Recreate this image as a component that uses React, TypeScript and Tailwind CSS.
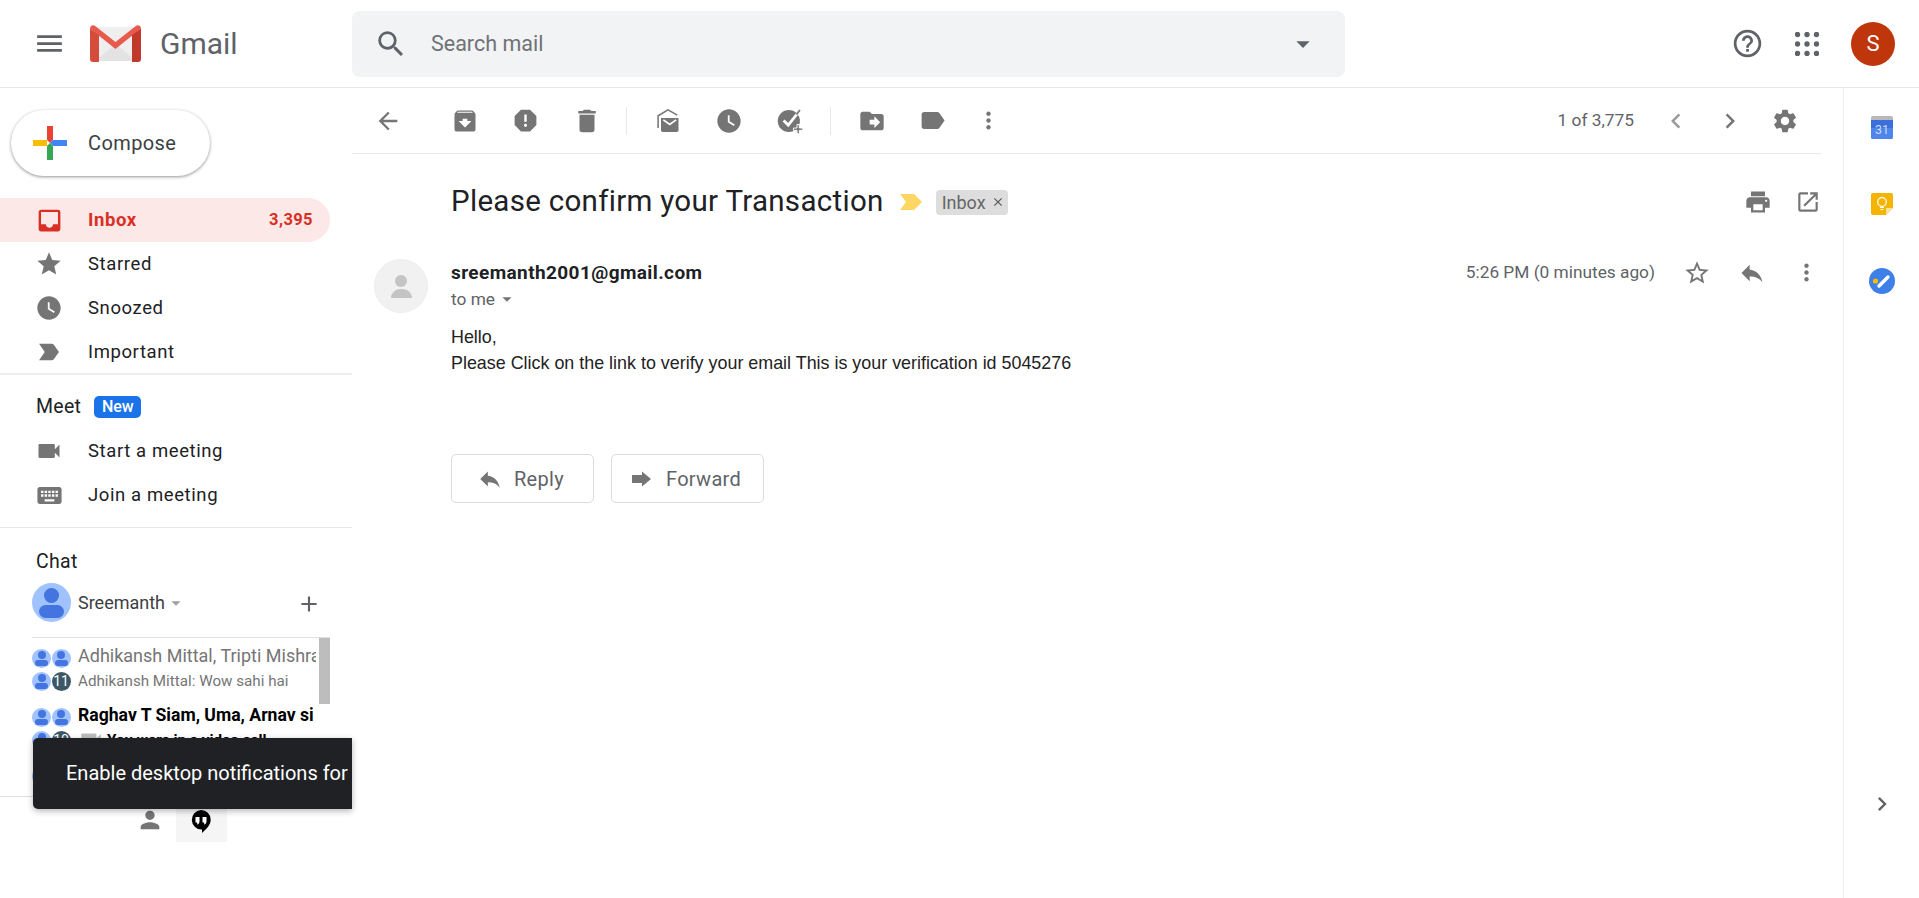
import React from 'react';
import {
  MdAdd,
  MdArchive,
  MdArrowBack,
  MdArrowDropDown,
  MdChevronLeft,
  MdChevronRight,
  MdClose,
  MdDelete,
  MdDriveFileMove,
  MdHelpOutline,
  MdInbox,
  MdKeyboard,
  MdLabel,
  MdLabelImportant,
  MdMenu,
  MdMoreVert,
  MdOpenInNew,
  MdPerson,
  MdPrint,
  MdReply,
  MdReport,
  MdSearch,
  MdSettings,
  MdStar,
  MdStarBorder,
  MdVideocam,
  MdWatchLater,
} from 'react-icons/md';

const GmailLogo = () => (
  <svg width="51" height="37" viewBox="0 0 51 37">
    <path d="M4 2h43v33H4z" fill="#efefef" />
    <path d="M5 36 25.500 19 46 36z" fill="#e3e3e3" />
    <path d="M0 3.500C0 .5 3-.8 5.500 1.200L25.500 17 45.500 1.200C48-.8 51 .5 51 3.500L25.500 24z" fill="#e75a4d" />
    <path d="M0 3.500 9 10v27H3a3 3 0 0 1-3-3z" fill="#d54c3f" />
    <path d="M51 3.500 42 10v27h6a3 3 0 0 0 3-3z" fill="#c0392b" />
  </svg>
);

const ComposePlus = () => (
  <svg width="34" height="34" viewBox="0 0 34 34">
    <path d="M14 0h6v14h-6z" fill="#ea4335" />
    <path d="M20 14h14v6H20z" fill="#4285f4" />
    <path d="M14 20h6v14h-6z" fill="#34a853" />
    <path d="M0 14h14v6H0z" fill="#fbbc04" />
    <path d="M14 14h6l-3 3z" fill="#ea4335" />
    <path d="M20 14v6l-3-3z" fill="#4285f4" />
    <path d="M14 20h6l-3-3z" fill="#34a853" />
  </svg>
);

const AppsDots = () => (
  <svg width="24" height="24" viewBox="0 0 24 24" fill="#5f6368">
    {[2.5, 12, 21.5].map((cy) =>
      [2.5, 12, 21.5].map((cx) => <circle key={`${cx}-${cy}`} cx={cx} cy={cy} r="2.7" />)
    )}
  </svg>
);

const MarkUnread = () => (
  <svg width="28" height="28" viewBox="0 0 24 24" fill="#757575">
    <path d="M3.500 18V7.500L12 2.500l8 4.500" fill="none" stroke="#757575" strokeWidth="1.300" />
    <path d="M6 9.500h15V20a1.500 1.500 0 0 1-1.500 1.500h-12A1.500 1.500 0 0 1 6 20z" />
    <path d="m8 11 5.500 4 5.500-4" fill="none" stroke="#fff" strokeWidth="1.500" />
  </svg>
);

const AddTask = () => (
  <svg width="28" height="28" viewBox="0 0 24 24" fill="#757575">
    <circle cx="11" cy="12" r="9.500" />
    <path d="m6.500 11.500 4 4 7.500-9.500" fill="none" stroke="#fff" strokeWidth="2.400" />
    <path d="m17.500 6.500 3-4" fill="none" stroke="#757575" strokeWidth="1.500" />
    <path d="M18 15h2v3h3v2h-3v3h-2v-3h-3v-2h3z" stroke="#fff" strokeWidth=".8" />
  </svg>
);

const ForwardFilled = () => (
  <svg width="24" height="24" viewBox="0 0 24 24" fill="#757575">
    <path d="M13 4.500 22 12l-9 7.500V16H3V8h10z" />
  </svg>
);

const CalendarIcon = () => (
  <svg width="22" height="23" viewBox="0 0 22 23">
    <path d="M2 0h18a2 2 0 0 1 2 2v3H0V2a2 2 0 0 1 2-2z" fill="#b9b9b9" />
    <path d="M0 4h22v17a2 2 0 0 1-2 2H2a2 2 0 0 1-2-2z" fill="#3d6fdc" />
    <path d="M0 12h22v9a2 2 0 0 1-2 2H2a2 2 0 0 1-2-2z" fill="#4f86ec" />
    <text x="11" y="18" textAnchor="middle" fontSize="12.5" fill="#c9dafc" fontFamily="Roboto, sans-serif">31</text>
  </svg>
);

const KeepIcon = () => (
  <svg width="22" height="22" viewBox="0 0 22 22">
    <path d="M2 0h18a2 2 0 0 1 2 2v13l-7 7H2a2 2 0 0 1-2-2V2a2 2 0 0 1 2-2z" fill="#f4b400" />
    <path d="M22 15h-7v7z" fill="#fbe39a" />
    <circle cx="11" cy="9" r="4.3" fill="none" stroke="#fff" strokeWidth="1.2" />
    <path d="M9 14.500h4M9.500 16.500h3" stroke="#fff" strokeWidth="1.2" />
  </svg>
);

const TasksIcon = () => (
  <svg width="26" height="26" viewBox="0 0 26 26">
    <circle cx="13" cy="13" r="13" fill="#3f7fe8" />
    <circle cx="6.5" cy="13" r="2.6" fill="#fbbc04" />
    <path d="m10 18 9-9" stroke="#fff" strokeWidth="3.4" strokeLinecap="round" />
  </svg>
);

const HangoutsIcon = () => (
  <svg width="20" height="23" viewBox="0 0 20 23">
    <path d="M10 0a9.700 9.700 0 0 1 9.700 9.700c0 5.300-4.500 9.300-8.700 13.300v-3.600A9.700 9.700 0 0 1 10 0z" fill="#000" />
    <path d="M4.500 7h4v4.200c0 1.800-1 3-2.300 3.300v-2H4.500zM11.500 7h4v4.200c0 1.800-1 3-2.300 3.300v-2h-1.700z" fill="#fff" />
  </svg>
);

function ToolIcon({ children, className = 'w-[61px]' }: { children: React.ReactNode; className?: string }) {
  return <div className={`flex h-[65px] shrink-0 items-center justify-center text-[#757575] ${className}`}>{children}</div>;
}

function NavRow({ icon, label }: { icon: React.ReactNode; label: string }) {
  return (
    <div className="flex h-[44px] items-center text-[#202124]">
      <div className="flex w-[88px] shrink-0 justify-center pl-[10px] text-[#757575]">{icon}</div>
      <span className="pt-[2px] text-[18.5px] tracking-[0.6px]">{label}</span>
    </div>
  );
}

function GroupAvatar({ badge }: { badge?: string }) {
  const dot = (
    <div className="flex h-[19px] w-[19px] flex-col items-center justify-center overflow-hidden rounded-full bg-[#a0c3ff]">
      <div className="h-[8px] w-[8px] rounded-full bg-[#4374e0]" />
      <div className="mt-[1px] h-[6px] w-[13px] rounded-full bg-[#4374e0]" />
    </div>
  );
  return (
    <div className="grid w-[39px] shrink-0 grid-cols-2">
      {dot}
      {dot}
      {dot}
      {badge ? (
        <div className="flex h-[19px] w-[19px] items-center justify-center rounded-full bg-[#3c5866] text-[14px] text-white">{badge}</div>
      ) : (
        dot
      )}
    </div>
  );
}

function Sidebar() {
  return (
    <aside className="relative flex w-[352px] shrink-0 flex-col">
      <div className="ml-[11px] mt-[22px] flex h-[66px] w-[199px] items-center rounded-full bg-white pl-[22px] shadow-[0_1px_3px_1px_rgba(60,64,67,0.2),0_1px_2px_0_rgba(60,64,67,0.3)]">
        <ComposePlus />
        <span className="ml-[21px] text-[20px] tracking-[0.4px] text-[#3c4043]">Compose</span>
      </div>

      <div className="mt-[22px] flex h-[44px] w-[330px] items-center rounded-r-full bg-[#fce8e6] text-[#d93025]">
        <div className="flex w-[88px] shrink-0 justify-center pl-[10px]">
          <MdInbox size={29} />
        </div>
        <span className="pt-[2px] text-[18.5px] font-bold tracking-[0.6px]">Inbox</span>
        <span className="ml-auto pr-[17px] text-[16.5px] font-bold tracking-[0.4px]">3,395</span>
      </div>
      <NavRow icon={<MdStar size={28} />} label="Starred" />
      <NavRow icon={<MdWatchLater size={28} />} label="Snoozed" />
      <NavRow icon={<MdLabelImportant size={28} />} label="Important" />

      <div className="-mt-[1px] h-[2px] bg-[#eeeeee]" />

      <div className="ml-[36px] mt-[21px] flex h-[22px] items-center">
        <span className="text-[19.5px] tracking-[0.3px] text-[#202124]">Meet</span>
        <span className="ml-[13px] flex h-[22px] w-[47px] items-center justify-center rounded-[5px] bg-[#1a73e8] text-[16px] font-medium text-white">New</span>
      </div>
      <div className="mt-[11px]">
        <NavRow icon={<MdVideocam size={28} />} label="Start a meeting" />
        <NavRow icon={<MdKeyboard size={29} />} label="Join a meeting" />
      </div>

      <div className="mt-[10px] h-[1px] bg-[#e8e8e8]" />

      <div className="ml-[36px] mt-[22px] flex h-[24px] items-center text-[19.5px] tracking-[0.3px] text-[#202124]">Chat</div>
      <div className="ml-[32px] mt-[9px] flex h-[39px] w-[298px] items-center">
        <div className="flex h-[39px] w-[39px] flex-col items-center justify-center overflow-hidden rounded-full bg-[#a0c3ff]">
          <div className="h-[15px] w-[15px] rounded-full bg-[#4374e0]" />
          <div className="mt-[2px] h-[13px] w-[25px] rounded-full bg-[#4374e0]" />
        </div>
        <span className="ml-[7px] text-[18px] text-[#3c4043]">Sreemanth</span>
        <MdArrowDropDown size={22} className="text-[#a0a0a0]" />
        <MdAdd size={26} className="ml-auto mr-[8px] mt-[2px] text-[#5f6368]" />
      </div>

      <div className="relative ml-[32px] mt-[15px] h-[159px] w-[298px] overflow-hidden border-t border-[#e0e0e0]">
        <div className="absolute right-0 top-0 h-[66px] w-[11px] bg-[#bdbdbd]" />
        <div className="mt-[11px] flex h-[45px] w-[284px]">
          <GroupAvatar badge="11" />
          <div className="ml-[7px] -mt-[5px] min-w-0 flex-1 overflow-hidden whitespace-nowrap">
            <div className="text-[18px] leading-[24px] text-[#757575]">Adhikansh Mittal, Tripti Mishra</div>
            <div className="mt-[3px] text-[15.2px] leading-[20px] text-[#757575]">Adhikansh Mittal: Wow sahi hai</div>
          </div>
        </div>
        <div className="mt-[14px] flex h-[45px] w-[284px]">
          <GroupAvatar badge="10" />
          <div className="ml-[7px] -mt-[5px] min-w-0 flex-1 overflow-hidden whitespace-nowrap">
            <div className="text-[17.6px] font-bold leading-[24px] text-black">Raghav T Siam, Uma, Arnav si</div>
            <div className="mt-[3px] flex h-[20px] items-center text-[15.2px] font-bold leading-[20px] text-black">
              <MdVideocam size={26} className="mr-[3px] text-[#bdbdbd]" />
              You were in a video call
            </div>
          </div>
        </div>
        <div className="mt-[14px] flex h-[45px] w-[284px]">
          <GroupAvatar />
        </div>
      </div>

      <div className="h-[1px] bg-[#e0e0e0]" />
      <div className="flex h-[45px] items-center pl-[136px]">
        <MdPerson size={28} className="text-[#757575]" />
        <div className="ml-[12px] flex h-[45px] w-[51px] items-center justify-center self-stretch bg-[#f5f5f5] pr-[2px] pt-[4px]">
          <HangoutsIcon />
        </div>
      </div>

      <div className="absolute left-[33px] top-[650px] flex h-[71px] w-[319px] items-center overflow-hidden whitespace-nowrap rounded-l-[5px] bg-[#202124] pb-[2px] pl-[33px] text-[20px] text-white shadow-[0_2px_6px_rgba(0,0,0,0.3)]">
        Enable desktop notifications for
      </div>
    </aside>
  );
}

export default function App() {
  return (
    <div className="flex h-[898px] w-full flex-col overflow-hidden bg-white font-['Roboto',sans-serif]">
      <header className="flex h-[88px] shrink-0 items-center border-b border-[#e8e8e8]">
        <div className="flex w-[98px] justify-center text-[#5f6368]">
          <MdMenu size={33} />
        </div>
        <div className="-ml-[8px]">
          <GmailLogo />
        </div>
        <span className="ml-[19px] w-[192px] text-[30px] text-[#5f6368]">Gmail</span>
        <div className="flex h-[66px] w-[993px] items-center rounded-[8px] bg-[#f1f3f4] pl-[22px] pr-[26px]">
          <MdSearch size={34} className="text-[#5f6368]" />
          <span className="ml-[23px] pt-[2px] text-[21.5px] text-[#6f7276]">Search mail</span>
          <MdArrowDropDown size={32} className="ml-auto text-[#5f6368]" />
        </div>
        <div className="ml-auto flex items-center pr-[24px]">
          <MdHelpOutline size={33} className="mr-[31px] text-[#5f6368]" />
          <AppsDots />
          <div className="ml-[32px] flex h-[44px] w-[44px] items-center justify-center rounded-full bg-[#bf360c] text-[22px] text-white">S</div>
        </div>
      </header>

      <div className="flex min-h-0 flex-1">
        <Sidebar />

        <main className="min-w-0 flex-1">
          <div className="flex h-[66px] items-center border-b border-[#ebebeb]">
            <ToolIcon className="w-[72px]">
              <MdArrowBack size={28} />
            </ToolIcon>
            <div className="w-[10px]" />
            <ToolIcon><MdArchive size={28} /></ToolIcon>
            <ToolIcon><MdReport size={29} /></ToolIcon>
            <ToolIcon><MdDelete size={30} /></ToolIcon>
            <div className="ml-[9px] mr-[10px] h-[28px] w-[1px] bg-[#e8e8e8]" />
            <ToolIcon><MarkUnread /></ToolIcon>
            <ToolIcon><MdWatchLater size={28} /></ToolIcon>
            <ToolIcon><AddTask /></ToolIcon>
            <div className="ml-[10px] mr-[10px] h-[28px] w-[1px] bg-[#e8e8e8]" />
            <ToolIcon><MdDriveFileMove size={28} /></ToolIcon>
            <ToolIcon><MdLabel size={29} /></ToolIcon>
            <ToolIcon className="w-[50px]"><MdMoreVert size={27} /></ToolIcon>
            <span className="ml-auto text-[17.3px] text-[#5f6368]">1 of 3,775</span>
            <MdChevronLeft size={30} className="ml-[27px] text-[#9a9a9a]" />
            <MdChevronRight size={30} className="ml-[24px] text-[#757575]" />
            <MdSettings size={28} className="ml-[26px] mr-[22px] text-[#757575]" />
          </div>

          <div className="flex h-[96px] items-center pl-[99px]">
            <h1 className="-mt-[2px] text-[29.5px] font-normal tracking-[0.3px] text-[#202124]">Please confirm your Transaction</h1>
            <svg width="22" height="16" viewBox="0 0 22 16" className="ml-[16px]">
              <path d="M0 0h14l8 8-8 8H0l6-8z" fill="#fdd663" />
            </svg>
            <span className="ml-[14px] flex h-[25px] items-center rounded-[4px] bg-[#dddddd] pl-[6px] pr-[3px] text-[18px] text-[#666666]">
              Inbox
              <MdClose size={14} className="ml-[5px] text-[#555555]" />
            </span>
            <MdPrint size={28} className="ml-auto text-[#757575]" />
            <MdOpenInNew size={26} className="ml-[23px] text-[#757575]" />
          </div>

          <div className="mt-[9px] flex pl-[22px]">
            <div className="flex h-[54px] w-[54px] shrink-0 flex-col items-center justify-center rounded-full border border-[#eeeeee] bg-[#f1f1f1]">
              <div className="h-[12px] w-[12px] rounded-full bg-[#c4c4c4]" />
              <div className="mt-[2px] h-[9px] w-[21px] rounded-t-full bg-[#c4c4c4]" />
            </div>
            <div className="ml-[23px] pt-[3px]">
              <div className="text-[19px] font-bold leading-[22px] tracking-[0.4px] text-[#202124]">sreemanth2001@gmail.com</div>
              <div className="mt-[4px] flex items-center text-[17.3px] leading-[22px] text-[#5f6368]">
                to me
                <MdArrowDropDown size={22} className="ml-[1px] text-[#757575]" />
              </div>
            </div>
            <div className="ml-auto flex h-[27px] items-center">
              <span className="text-[17.3px] text-[#5f6368]">5:26 PM (0 minutes ago)</span>
              <MdStarBorder size={28} className="ml-[28px] text-[#757575]" />
              <MdReply size={28} className="ml-[27px] text-[#757575]" />
              <MdMoreVert size={27} className="ml-[27px] mr-[1px] text-[#757575]" />
            </div>
          </div>

          <div className="ml-[99px] mt-[11px] font-['Liberation_Sans',sans-serif] text-[17.9px] leading-[26px] text-[#222222]">
            <div>Hello,</div>
            <div>Please Click on the link to verify your email This is your verification id 5045276</div>
          </div>

          <div className="ml-[99px] mt-[78px] flex gap-[17px]">
            <div className="flex h-[49px] w-[143px] items-center rounded-[5px] border border-[#dadce0] pl-[25px] text-[20px] tracking-[0.3px] text-[#5f6368]">
              <MdReply size={26} className="text-[#757575]" />
              <span className="ml-[11px]">Reply</span>
            </div>
            <div className="flex h-[49px] w-[153px] items-center rounded-[5px] border border-[#dadce0] pl-[17px] text-[20px] tracking-[0.3px] text-[#5f6368]">
              <ForwardFilled />
              <span className="ml-[13px]">Forward</span>
            </div>
          </div>
        </main>

        <aside className="ml-[22px] flex w-[76px] shrink-0 flex-col items-center border-l border-[#eeeeee] pt-[28px]">
          <CalendarIcon />
          <div className="mt-[54px]"><KeepIcon /></div>
          <div className="mt-[53px]"><TasksIcon /></div>
          <MdChevronRight size={28} className="mt-[496px] text-[#5f6368]" />
        </aside>
      </div>
    </div>
  );
}
